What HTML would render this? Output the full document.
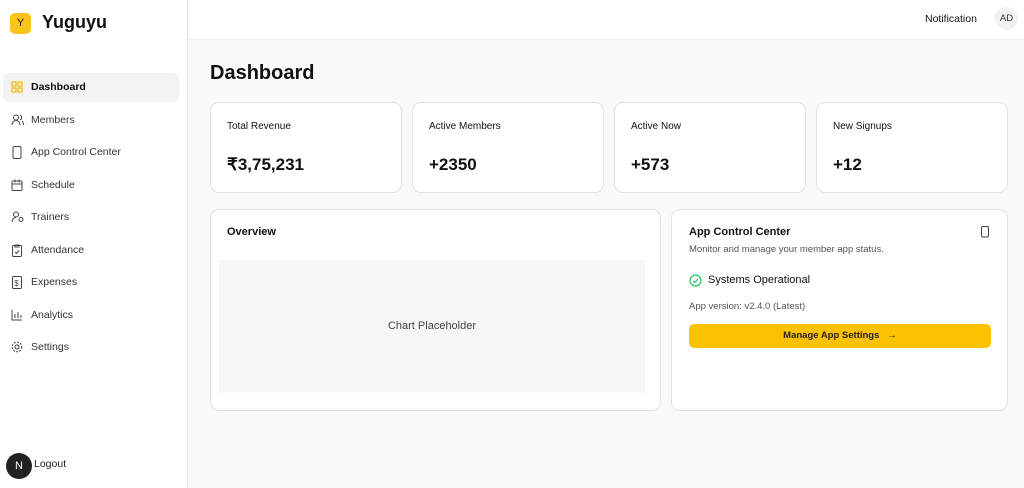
<!DOCTYPE html><html><head><style>
*{box-sizing:border-box;margin:0;padding:0}
body{width:1024px;height:488px;overflow:hidden;font-family:"Liberation Sans",sans-serif;background:#fafafa;color:#111;position:relative}
.sb{position:absolute;left:0;top:0;width:188px;height:488px;background:#fff;border-right:1px solid #e5e5e5}
.logo{position:absolute;left:10px;top:13px;width:21px;height:21px;background:#fcc419;border-radius:5px;font-size:11px;text-align:center;line-height:21px}
.brand{position:absolute;left:42px;top:12px;font-size:18px;font-weight:bold}
.nav{position:absolute;left:3px;width:176px;height:29px;font-size:10.5px;color:#333;line-height:29px;padding-left:28px;border-radius:6px}
.nav svg{position:absolute;left:8px;top:8px}
.act{background:#f3f3f3;color:#111;font-weight:bold}
.hd{position:absolute;left:188px;top:0;right:0;height:40px;background:#fff;border-bottom:1px solid #eee}
.card{position:absolute;background:#fff;border:1px solid #e3e3e3;border-radius:9px}
.lbl{position:absolute;left:16px;top:18px;font-size:10px}
.val{position:absolute;left:16px;top:52px;font-size:17px;font-weight:bold}
</style></head><body>
<div class="sb">
<div class="logo">Y</div><div class="brand">Yuguyu</div>
<div class="nav act" style="top:73px"><svg width="12" height="12" fill="none" stroke="#f5b800" stroke-width="1.2"><rect x="1" y="1" width="4" height="4"/><rect x="7" y="1" width="4" height="4"/><rect x="1" y="7" width="4" height="4"/><rect x="7" y="7" width="4" height="4"/></svg>Dashboard</div>
<div class="nav" style="top:106px"><svg width="13" height="12" fill="none" stroke="#444" stroke-width="1"><circle cx="5" cy="3.5" r="2.5"/><path d="M1 11c0-3 2-4.5 4-4.5s4 1.5 4 4.5M9 1.2a2.4 2.4 0 010 4.6M11 7c1 .8 1.5 2 1.5 4"/></svg>Members</div>
<div class="nav" style="top:138px"><svg width="12" height="13" fill="none" stroke="#444" stroke-width="1"><rect x="2" y="0.5" width="8" height="12" rx="1.5"/></svg>App Control Center</div>
<div class="nav" style="top:171px"><svg width="12" height="12" fill="none" stroke="#444" stroke-width="1"><rect x="1" y="2" width="10" height="9.5" rx="1"/><path d="M1 5h10M4 0.5v3M8 0.5v3"/></svg>Schedule</div>
<div class="nav" style="top:203px"><svg width="13" height="12" fill="none" stroke="#444" stroke-width="1"><circle cx="5" cy="3.5" r="2.5"/><path d="M1 11c0-3 2-4.5 4-4.5"/><circle cx="10" cy="8.5" r="2"/></svg>Trainers</div>
<div class="nav" style="top:236px"><svg width="12" height="13" fill="none" stroke="#444" stroke-width="1"><rect x="1.5" y="1.5" width="9" height="11" rx="1"/><path d="M4 1h4v2H4zM4 8l1.5 1.5L8 6.5"/></svg>Attendance</div>
<div class="nav" style="top:268px"><svg width="12" height="13" fill="none" stroke="#444" stroke-width="1"><rect x="1.5" y="0.5" width="9" height="12" rx="1"/><text x="3.3" y="10" font-size="8" fill="#444" stroke="none">$</text></svg>Expenses</div>
<div class="nav" style="top:301px"><svg width="12" height="12" fill="none" stroke="#444" stroke-width="1"><path d="M1 1v10h10M4 9V5M7 9V3M10 9V6"/></svg>Analytics</div>
<div class="nav" style="top:333px"><svg width="12" height="12" fill="none" stroke="#444" stroke-width="1"><circle cx="6" cy="6" r="2"/><circle cx="6" cy="6" r="4.8" stroke-dasharray="2 1.2"/></svg>Settings</div>
<div style="position:absolute;left:6px;top:453px;width:26px;height:26px;border-radius:50%;background:#222;color:#fff;font-size:11px;text-align:center;line-height:26px">N</div>
<div style="position:absolute;left:34px;top:458px;font-size:10.5px;color:#222">Logout</div>
</div>
<div class="hd">
<div style="position:absolute;left:737px;top:13px;font-size:10.5px">Notification</div>
<div style="position:absolute;left:807px;top:7px;width:23px;height:23px;border-radius:50%;background:#f2f2f2;font-size:9.5px;text-align:center;line-height:23px;color:#333">AD</div>
</div>
<div style="position:absolute;left:210px;top:62px;font-size:20px;font-weight:bold">Dashboard</div>
<div class="card" style="left:210px;top:102px;width:192px;height:91px"><div class="lbl">Total Revenue</div><div class="val">₹3,75,231</div></div>
<div class="card" style="left:412px;top:102px;width:192px;height:91px"><div class="lbl">Active Members</div><div class="val">+2350</div></div>
<div class="card" style="left:614px;top:102px;width:192px;height:91px"><div class="lbl">Active Now</div><div class="val">+573</div></div>
<div class="card" style="left:816px;top:102px;width:192px;height:91px"><div class="lbl">New Signups</div><div class="val">+12</div></div>
<div class="card" style="left:210px;top:209px;width:451px;height:202px">
<div style="position:absolute;left:16px;top:16px;font-size:11px;font-weight:bold">Overview</div>
<div style="position:absolute;left:8px;top:50px;width:426px;height:133px;background:#f7f7f7;font-size:11px;color:#444;text-align:center;line-height:133px">Chart Placeholder</div>
</div>
<div class="card" style="left:671px;top:209px;width:337px;height:202px">
<div style="position:absolute;left:17px;top:16px;font-size:11px;font-weight:bold">App Control Center</div>
<svg style="position:absolute;left:308px;top:16px" width="10" height="12" fill="none" stroke="#444" stroke-width="1"><rect x="1.5" y="0.5" width="7" height="10.5" rx="1.5"/></svg>
<div style="position:absolute;left:17px;top:34px;font-size:9.5px;color:#555">Monitor and manage your member app status.</div>
<svg style="position:absolute;left:17px;top:64px" width="13" height="13" fill="none" stroke="#22c55e" stroke-width="1.2"><circle cx="6.5" cy="6.5" r="5.5"/><path d="M4 6.8l1.8 1.7L9 5"/></svg>
<div style="position:absolute;left:36px;top:64px;font-size:11px">Systems Operational</div>
<div style="position:absolute;left:17px;top:91px;font-size:9.5px;color:#555">App version: v2.4.0 (Latest)</div>
<div style="position:absolute;left:17px;top:114px;width:302px;height:24px;background:#fcc200;border-radius:5px;font-size:9.5px;font-weight:bold;text-align:center;line-height:24px;color:#222">Manage App Settings &nbsp; →</div>
</div>
</body></html>
